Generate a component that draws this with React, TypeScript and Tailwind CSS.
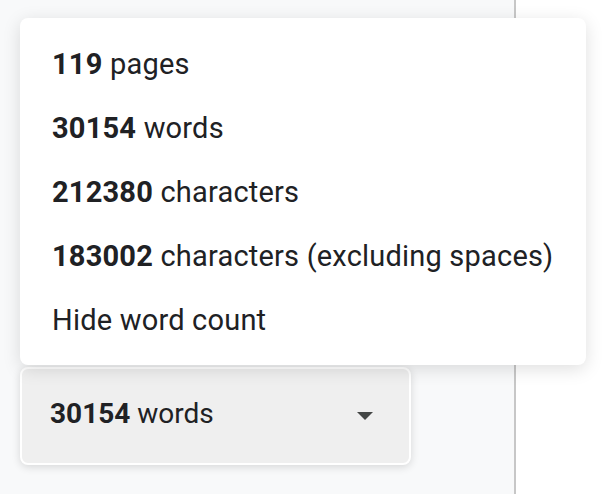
const items: { num?: string; label: string }[] = [
  { num: '119', label: 'pages' },
  { num: '30154', label: 'words' },
  { num: '212380', label: 'characters' },
  { num: '183002', label: 'characters (excluding spaces)' },
  { label: 'Hide word count' },
]

export default function App() {
  return (
    <div className="flex h-[494px] w-[610px] overflow-hidden bg-white font-['Roboto',sans-serif] text-[#202124]">
      <div className="relative w-[516px] shrink-0 border-r-2 border-[#c7c7c7] bg-[#f8f9fa]">
        {/* word count chip */}
        <div className="pl-5 pt-[367px]">
          <button
            type="button"
            className="flex h-[98px] w-[391px] items-center justify-between rounded-lg border-2 border-white bg-[#efefef] pb-1 pl-7 pr-9 shadow-[0_2px_8px_rgba(0,0,0,0.14)]"
          >
            <span className="text-[28px]">
              <b className="font-bold">30154</b> words
            </span>
            <svg width="16" height="8" viewBox="0 0 16 8" className="mt-1">
              <path d="M0 0h16L8 8z" fill="#444746" />
            </svg>
          </button>
        </div>

        {/* dropdown */}
        <div className="absolute left-5 top-[18px] w-[566px] rounded-lg bg-white pb-[13px] pt-[14px] shadow-[0_4px_18px_rgba(0,0,0,0.13)]">
          {items.map((it) => (
            <div key={it.label} className="h-16 whitespace-nowrap pl-8 text-[29px] leading-[64px] tracking-[0.2px]">
              {it.num && <b className="font-bold">{it.num} </b>}
              {it.label}
            </div>
          ))}
        </div>
      </div>
      <div className="flex-1" />
    </div>
  )
}
